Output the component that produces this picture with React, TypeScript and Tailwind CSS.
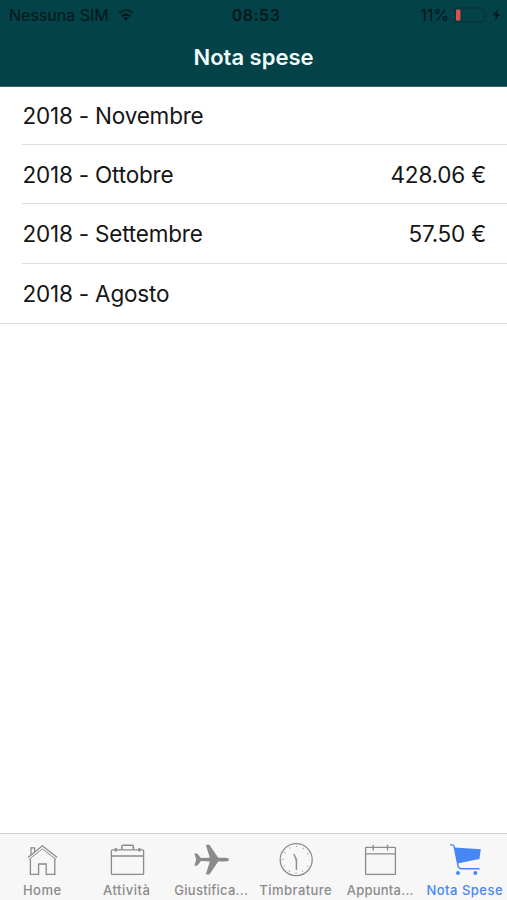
import React from "react"

interface Expense {
  month: string
  amount?: string
}

interface Tab {
  label: string
  icon: React.ReactNode
  labelClass: string
  active?: boolean
}

const expenses: Expense[] = [
  { month: "2018 - Novembre" },
  { month: "2018 - Ottobre", amount: "428.06 €" },
  { month: "2018 - Settembre", amount: "57.50 €" },
  { month: "2018 - Agosto" },
]

const Icon = ({ children }: { children: React.ReactNode }) => (
  <svg
    viewBox="0 0 36 36"
    className="h-9 w-9 shrink-0"
    fill="none"
    stroke="currentColor"
    strokeWidth="1.3"
  >
    {children}
  </svg>
)

const HomeIcon = () => (
  <Icon>
    <path d="M4 15.4 18.4 3.8 33.2 15.4" />
    <path d="M5.4 17.2 18.4 6.8 31.8 17.2" strokeWidth="1" />
    <path d="M7 12.8V5.8h3.6v3.9" />
    <path d="M6.4 16.4v16h8.2V22h7.6v10.4h8.6v-16" />
  </Icon>
)

const BriefcaseIcon = () => (
  <Icon>
    <rect x="2.4" y="7.8" width="32.2" height="24.6" rx="1" />
    <path d="M2.4 14h32.2" />
    <path d="M12.8 7.4V4.8q0-1.6 1.6-1.6h8.4q1.6 0 1.6 1.6v2.6" strokeWidth="1.6" />
    <path d="M6.8 6v3.6M30.4 6v3.6" strokeWidth="2" />
  </Icon>
)

const PlaneIcon = () => (
  <Icon>
    <path
      d="M36 17.6q0 1.9-4 1.9h-6.8L16.4 32.4h-3.6l4-12.9-8.8-.4-3.8 4.6H1.4l1.8-6.1-1.8-6.1h2.8L8 16.1l8.8-.4-4-12.9h3.6l8.8 12.9H32q4 0 4 1.9z"
      fill="currentColor"
      stroke="none"
    />
  </Icon>
)

const ClockIcon = () => (
  <Icon>
    <circle cx="18.2" cy="17.7" r="16" />
    <circle cx="18.2" cy="17.7" r="13.3" strokeWidth="1.4" strokeDasharray="0.8 6.164" strokeDashoffset="0.4" />
    <path d="M18.4 28V17.7L15.8 12" strokeWidth="1.4" />
    <circle cx="18.3" cy="17.7" r="1" fill="currentColor" stroke="none" />
  </Icon>
)

const CalendarIcon = () => (
  <Icon>
    <rect x="3.6" y="5.4" width="29.8" height="27" rx="0.6" />
    <path d="M3.6 11.9h29.8M11.2 2.8v5.8M25.5 2.8v5.8" />
  </Icon>
)

const CartIcon = () => (
  <Icon>
    <path d="M3 2.9h2.6q1.2 0 1.5 1.4L11 23.6q.6 3.2 3.6 3.2h18" strokeWidth="1.4" />
    <path d="M7.6 5.4 33.8 7.2 32.4 17 10.6 21.4z" fill="currentColor" stroke="none" />
    <circle cx="11" cy="31" r="2" fill="currentColor" stroke="none" />
    <circle cx="28.4" cy="31" r="2" fill="currentColor" stroke="none" />
  </Icon>
)

const tabs: Tab[] = [
  { label: "Home", icon: <HomeIcon />, labelClass: "tracking-[0.5px]" },
  { label: "Attività", icon: <BriefcaseIcon />, labelClass: "tracking-[0.5px]" },
  { label: "Giustifica...", icon: <PlaneIcon />, labelClass: "tracking-[0.25px]" },
  { label: "Timbrature", icon: <ClockIcon />, labelClass: "tracking-[0.45px]" },
  { label: "Appunta...", icon: <CalendarIcon />, labelClass: "tracking-[0.25px]" },
  { label: "Nota Spese", icon: <CartIcon />, labelClass: "tracking-[0.5px]", active: true },
]

const StatusBar = () => (
  <div className="grid h-[29px] grid-cols-3 items-center pr-1 pl-[9px] text-[#02181b]">

    <div className="flex items-center gap-2">
      <span className="text-[16px] whitespace-nowrap">Nessuna SIM</span>
      <svg viewBox="0 0 18 13" className="h-[13px] w-[18px] shrink-0" fill="none" stroke="currentColor" strokeWidth="2.2">
        <path d="M2 5Q9-.6 16 5" strokeOpacity="0.7" />
        <path d="M4.8 8.2Q9 5 13.2 8.2" />
        <path d="M9 12.4 6.6 9.9Q9 8 11.4 9.9z" fill="currentColor" stroke="none" />
      </svg>
    </div>

    <span className="text-center text-[16px] font-semibold tracking-[0.5px]">08:53</span>

    <div className="flex items-center justify-end">
      <span className="text-[16px]">11%</span>
      <svg viewBox="0 0 50 18" className="ml-1 h-[18px] w-[50px] shrink-0">
        <rect x="1.5" y="2" width="30" height="14" rx="3" fill="none" stroke="#07363a" strokeWidth="1.4" />
        <path d="M33.4 6.8q2 2.2 0 4.4z" fill="#07363a" />
        <rect x="3" y="3.6" width="4.4" height="10.8" rx="1" fill="#e0504f" />
        <path d="M45.2 3 39.6 9.6h3.6l-1.6 5.4L47.4 8H44z" fill="currentColor" />
      </svg>
    </div>

  </div>
)

const App = () => {
  return (
    <div className="flex h-[900px] w-[507px] flex-col overflow-hidden bg-white font-['Inter',sans-serif]">

      {/* HEADER */}

      <header className="h-[87px] shrink-0 border-b border-[#3b656b] bg-[#024248]">
        <StatusBar />
        <h1 className="flex h-14 items-center justify-center text-[22px] font-semibold text-[#f2fbfb]">
          Nota spese
        </h1>
      </header>

      {/* MONTHS */}

      <ul className="flex-1 text-[22.5px] tracking-[-0.2px] text-[#151515]">
        {expenses.map(item => (
          <li key={item.month} className="group pl-[22px] last:border-b last:border-[#d9d9db]">
            <div className="flex h-[59.4px] items-center justify-between border-b border-[#dededf] pt-[1.5px] pr-[21px] pl-[0.5px] group-first:h-[58px] group-first:pt-0 group-last:border-b-0 group-last:pt-0">
              <span>{item.month}</span>
              {item.amount && <span>{item.amount}</span>}
            </div>
          </li>
        ))}
      </ul>

      {/* TAB BAR */}

      <nav className="grid h-[67px] shrink-0 grid-cols-6 border-t border-[#cfcfd0] bg-[#f7f7f7] pt-2">
        {tabs.map(tab => (
          <button
            key={tab.label}
            className={`flex flex-col items-center ${tab.active ? "text-[#4687f5]" : "text-[#8b8b8b]"}`}
          >
            {tab.icon}
            <span className={`mt-1 text-[13px] leading-4 font-medium whitespace-nowrap ${tab.labelClass}`}>
              {tab.label}
            </span>
          </button>
        ))}
      </nav>

    </div>
  )
}

export default App
